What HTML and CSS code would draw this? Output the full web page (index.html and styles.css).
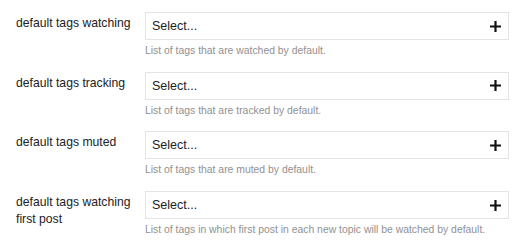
FILE: index.html
```html
<!DOCTYPE html>
<html>
<head>
<meta charset="utf-8">
<link rel="stylesheet" href="styles.css">
</head>
<body>
<div class="settings">
  <div class="row">
    <div class="label">default tags watching</div>
    <div class="control">
      <div class="select"><span class="placeholder">Select...</span><svg class="plus" width="11" height="11" viewBox="0 0 11 11"><path d="M5.5 0v11M0 5.5h11" stroke="#111" stroke-width="2.2"/></svg></div>
      <div class="desc">List of tags that are watched by default.</div>
    </div>
  </div>
  <div class="row">
    <div class="label">default tags tracking</div>
    <div class="control">
      <div class="select"><span class="placeholder">Select...</span><svg class="plus" width="11" height="11" viewBox="0 0 11 11"><path d="M5.5 0v11M0 5.5h11" stroke="#111" stroke-width="2.2"/></svg></div>
      <div class="desc">List of tags that are tracked by default.</div>
    </div>
  </div>
  <div class="row">
    <div class="label">default tags muted</div>
    <div class="control">
      <div class="select"><span class="placeholder">Select...</span><svg class="plus" width="11" height="11" viewBox="0 0 11 11"><path d="M5.5 0v11M0 5.5h11" stroke="#111" stroke-width="2.2"/></svg></div>
      <div class="desc">List of tags that are muted by default.</div>
    </div>
  </div>
  <div class="row">
    <div class="label">default tags watching first post</div>
    <div class="control">
      <div class="select"><span class="placeholder">Select...</span><svg class="plus" width="11" height="11" viewBox="0 0 11 11"><path d="M5.5 0v11M0 5.5h11" stroke="#111" stroke-width="2.2"/></svg></div>
      <div class="desc">List of tags in which first post in each new topic will be watched by default.</div>
    </div>
  </div>
</div>
</body>
</html>
```
FILE: styles.css
```css
body {
  margin: 0;
  background: #fff;
  font-family: "Liberation Sans", Arial, sans-serif;
  color: #222;
}
.settings {
  padding: 12px 0 0 16px;
}
.row {
  display: flex;
  margin-bottom: 13.7px;
}
.label {
  width: 129px;
  font-size: 12.2px;
  line-height: 17px;
  padding-top: 3px;
  padding-right: 8px;
  box-sizing: border-box;
}
.control {
  width: 364px;
}
.select {
  box-sizing: border-box;
  height: 28px;
  border: 1px solid #e4e4e4;
  display: flex;
  align-items: center;
  justify-content: space-between;
  padding: 0 7px 0 6px;
}
.placeholder {
  font-size: 12.5px;
}
.plus {
  display: block;
}
.desc {
  margin-top: 4px;
  font-size: 10.4px;
  line-height: 14px;
  color: #919191;
}
```
